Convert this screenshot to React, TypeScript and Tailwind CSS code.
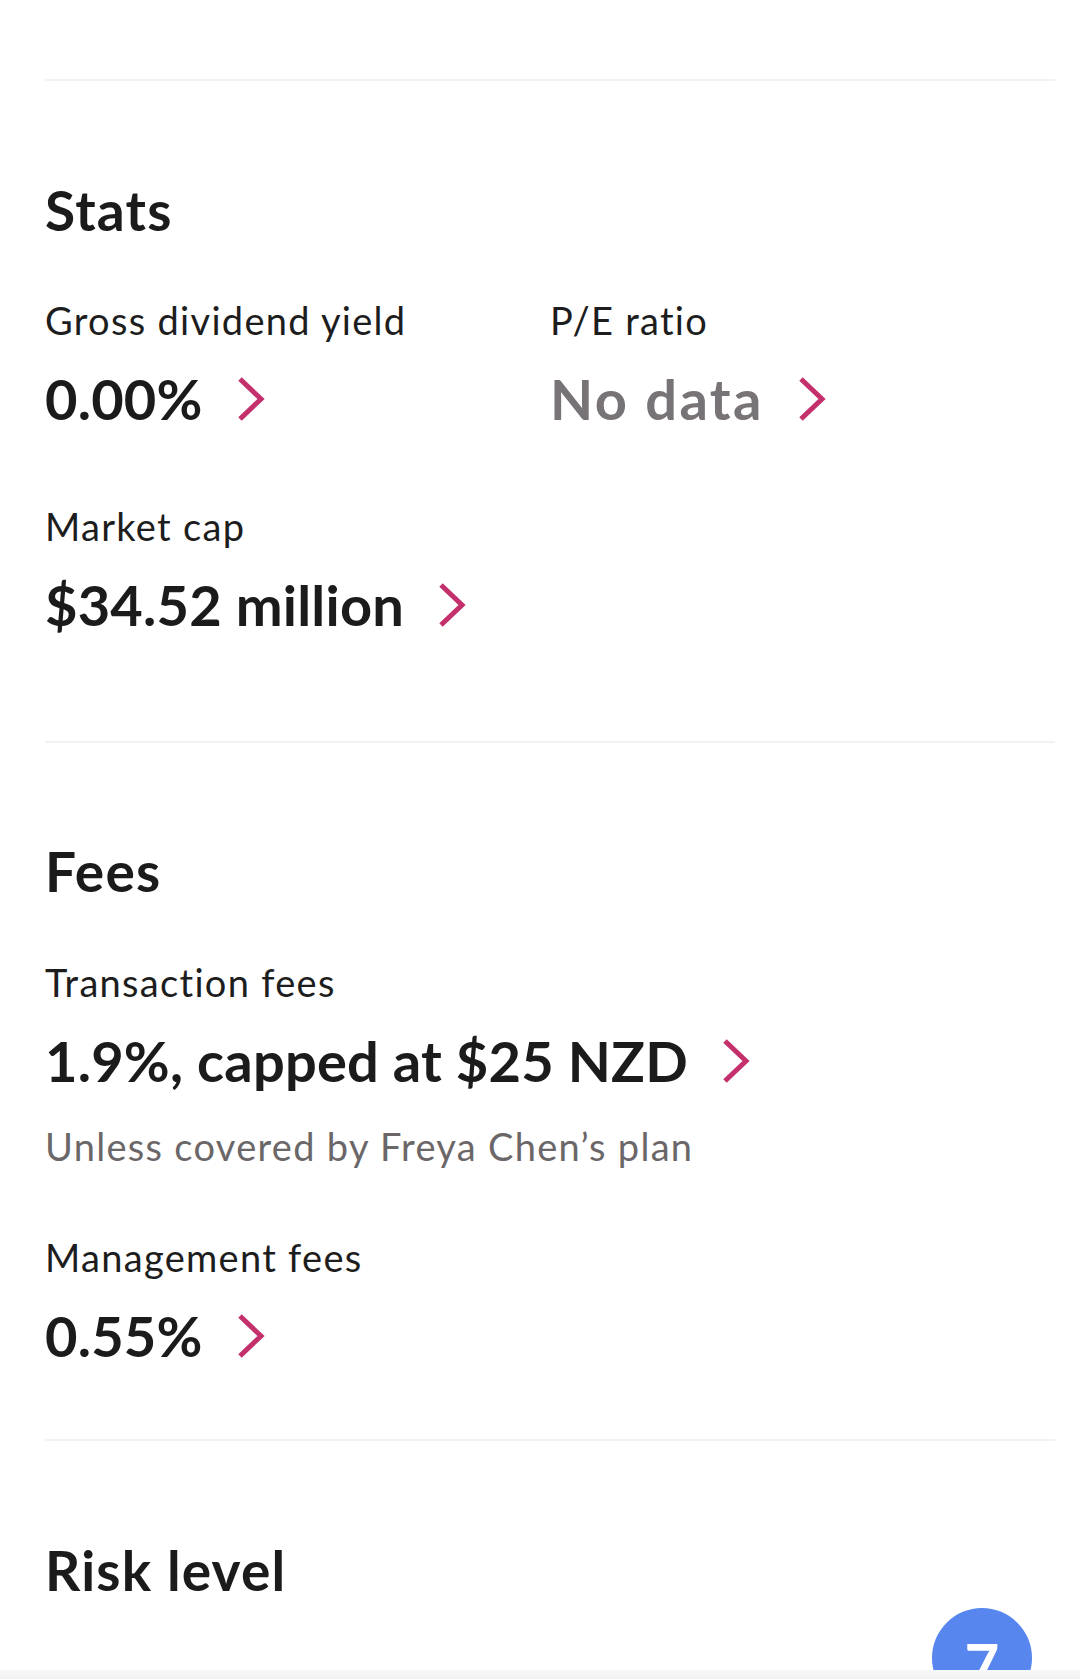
import type { ReactNode } from "react";

const FONT = { fontFamily: "Lato, 'Noto Sans', Arial, sans-serif" };

function Chevron() {
  return (
    <svg width="28" height="46" viewBox="0 0 28 46" className="shrink-0" aria-hidden>
      <polyline
        points="3,3 24,23 3,43"
        fill="none"
        stroke="#c4306c"
        strokeWidth="5"
        strokeLinejoin="miter"
      />
    </svg>
  );
}

function Divider() {
  return <div className="h-[2px] w-full bg-[#f2f2f2]" />;
}

function Heading({ children }: { children: ReactNode }) {
  return (
    <h2 className="text-[55px] font-bold leading-[54px] tracking-[1.2px] text-[#1b1b1b]">
      {children}
    </h2>
  );
}

type StatProps = {
  label: string;
  value: string;
  muted?: boolean;
  note?: string;
};

function Stat({ label, value, muted, note }: StatProps) {
  return (
    <div className="flex flex-col">
      <p className="text-[38px] leading-[44px] tracking-[1.3px] text-[#1d1d1d]">{label}</p>
      <button className="mt-[25px] flex items-center gap-[34px] text-left">
        <span
          className={`text-[56px] font-bold leading-[64px] ${
            muted ? "tracking-[2.4px] text-[#787376]" : "tracking-[0.2px] text-[#1b1b1b]"
          }`}
        >
          {value}
        </span>
        <Chevron />
      </button>
      {note && (
        <p className="mt-[31px] text-[38px] leading-[44px] tracking-[1.3px] text-[#6b6769]">
          {note}
        </p>
      )}
    </div>
  );
}

export default function App() {
  return (
    <div className="relative h-[1679px] overflow-hidden bg-white" style={FONT}>
      <main className="pl-[45px] pr-[25px] pt-[79px]">
        <Divider />

        <section className="pt-[102px]">
          <Heading>Stats</Heading>
          <div className="mt-[61px] grid grid-cols-2 gap-y-[73px]">
            <Stat label="Gross dividend yield" value="0.00%" />
            <Stat label="P/E ratio" value="No data" muted />
            <Stat label="Market cap" value="$34.52 million" />
          </div>
          <div className="h-[104px]" />
        </section>

        <Divider />

        <section className="pt-[101px]">
          <Heading>Fees</Heading>
          <div className="mt-[62px] flex flex-col gap-[67px]">
            <Stat
              label="Transaction fees"
              value="1.9%, capped at $25 NZD"
              note="Unless covered by Freya Chen’s plan"
            />
            <Stat label="Management fees" value="0.55%" />
          </div>
          <div className="h-[71px]" />
        </section>

        <Divider />

        <section className="pt-[102px]">
          <Heading>Risk level</Heading>
          <div className="mt-[11px] flex justify-end pr-[23px]">
            <div className="flex h-[100px] w-[100px] items-start justify-center rounded-full bg-[#5686ee] pt-[26px]">
              <span className="text-[60px] font-bold leading-[60px] text-white">7</span>
            </div>
          </div>
        </section>
      </main>

      <div className="absolute inset-x-0 bottom-0 h-[9px] bg-gradient-to-b from-[#f9f9f9] to-[#f1f1f1]" />
    </div>
  );
}
